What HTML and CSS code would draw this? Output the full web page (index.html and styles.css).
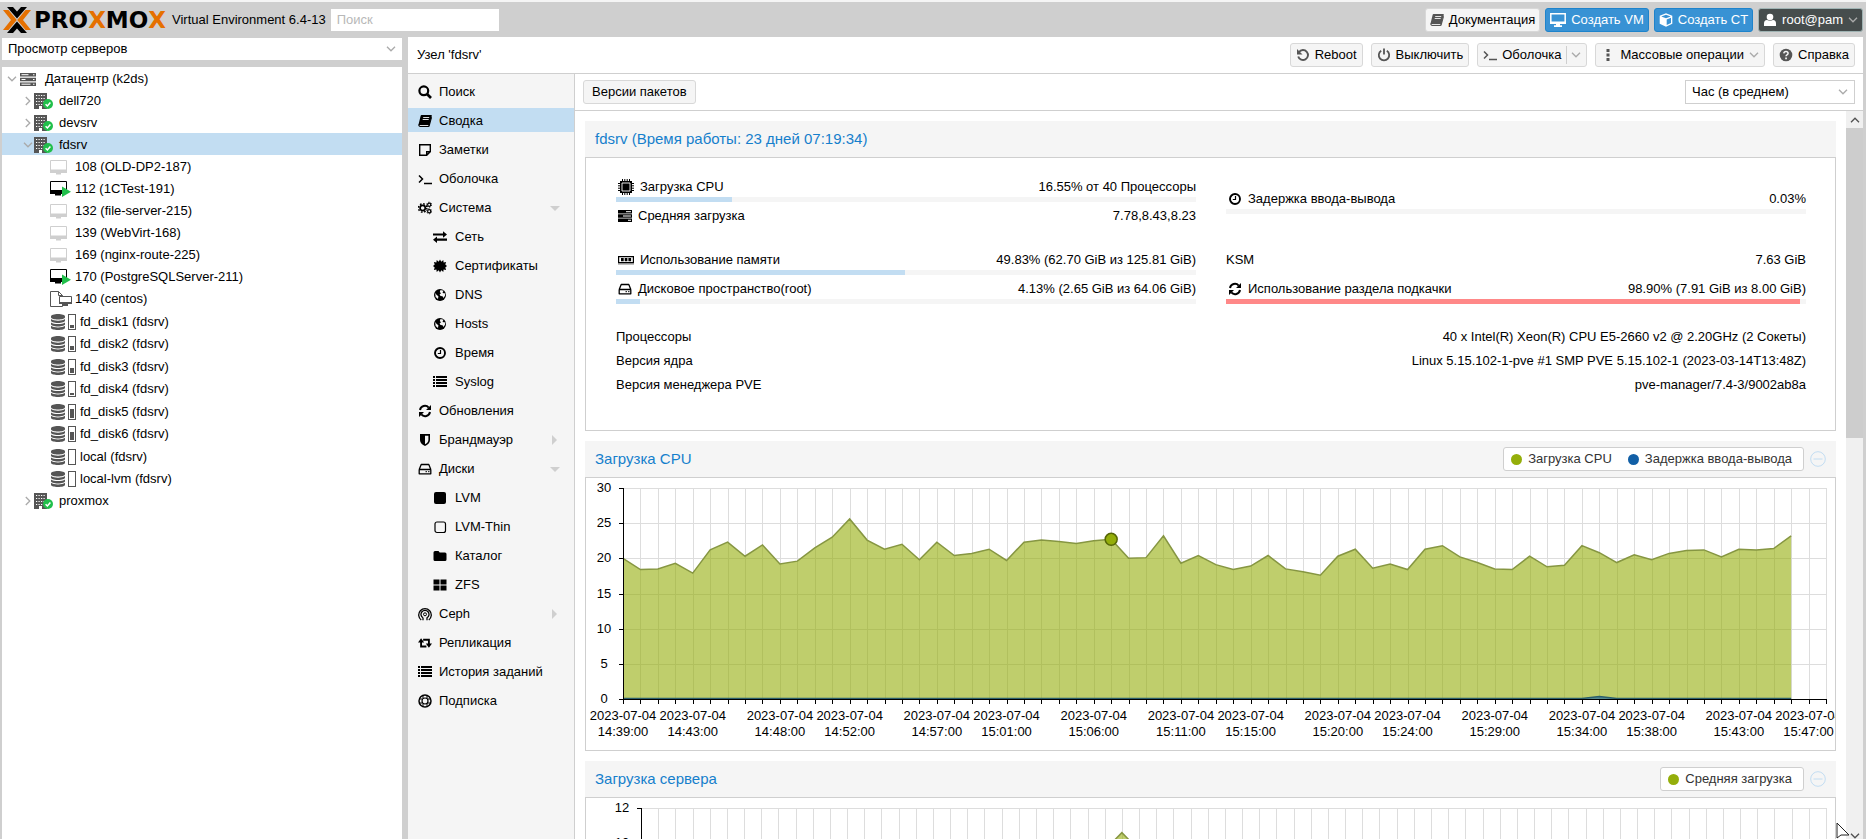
FILE: index.html
```html
<!doctype html>
<html lang="ru">
<head>
	<meta charset="UTF-8">
	<meta name="viewport" content="width=device-width, initial-scale=1.0">
	<title>fdsrv - Proxmox Virtual Environment</title>
	<link rel="stylesheet" href="styles.css">
</head>
<body>
	<!-- icon set -->
	<svg class="sprite" aria-hidden="true">
		<symbol id="chev-down" viewBox="0 0 10 6"><path d="M1 .8l4 4 4-4" fill="none" stroke="currentColor" stroke-width="1.3"/></symbol>
		<symbol id="chev-right" viewBox="0 0 6 10"><path d="M.8 1l4 4-4 4" fill="none" stroke="currentColor" stroke-width="1.3"/></symbol>
		<symbol id="logo" viewBox="0 0 28 26">
			<path d="M4 0h6l4 4.600 4-4.600h6l-10 11.400z"/>
			<path d="M4 26h6l4-4.600 4 4.600h6l-10-11.400z"/>
			<path d="M0 3h5.500l8.300 10-8.300 10H0l8-10zM28 3h-5.500l-8.300 10 8.300 10H28l-8-10z" fill="#e57000"/>
		</symbol>
		<symbol id="servers" viewBox="0 0 16 13"><path d="M0 0h16v3.500H0zM0 4.750h16v3.500H0zM0 9.500h16V13H0z"/><path d="M1.500 1.700h7M1.500 6.500h4M1.500 11.200h9" stroke="#fff"/><path d="M13 1.200h1.500v1H13zM13 6h1.500v1H13zM13 10.700h1.500v1H13z" fill="#fff"/></symbol>
		<symbol id="node" viewBox="0 0 19 16">
			<path d="M0 0h13v16H0z"/>
			<path d="M2 2.500h9M2 5.500h9M2 8.500h9M2 11.500h7" stroke="#fff" stroke-width="1.200" stroke-dasharray="1.200 1.300"/>
			<path d="M5 13h3v3H5z" fill="#fff"/>
			<circle cx="14" cy="11" r="5" fill="#21bf4b"/>
			<path d="M11.600 11.200l1.800 1.800 3-3.600" fill="none" stroke="#fff" stroke-width="1.500"/>
		</symbol>
		<symbol id="vm" viewBox="0 0 17 15"><path d="M.5.5h16v12H.5z" fill="#fff" stroke="currentColor"/><path d="M0 9.500h17V13H0zM6 13h5v1.500H6z"/></symbol>
		<symbol id="vm-run" viewBox="0 0 21 16"><path d="M.5.5h16v12H.5z" fill="#fff" stroke="#000"/><path d="M0 9h13v4H0zM5 13h6v1.500H5z" fill="#000"/><path d="M12 5.500l9 5.200-9 5.300z" fill="#21bf4b"/></symbol>
		<symbol id="template" viewBox="0 0 22 16"><path d="M.5.5h8l4 4v11H.5zM8.500.5v4h4" fill="#fff" stroke="currentColor"/><path d="M9.500 5.500h12v7h-12z" fill="#fff" stroke="currentColor"/><path d="M9 11h13v2H9zM13 13h5v2h-5z"/></symbol>
		<symbol id="db" viewBox="0 0 14 16"><path d="M7 0c3.900 0 7 1 7 2.300v1c0 1.300-3.100 2.300-7 2.300S0 4.600 0 3.300v-1C0 1 3.100 0 7 0z"/><path d="M0 5c1.500 1.300 4 1.700 7 1.700S12.500 6.300 14 5v1.800C14 8 11 9 7 9S0 8 0 6.800zM0 8.400c1.500 1.300 4 1.700 7 1.700s5.500-.4 7-1.700v1.800c0 1.200-3 2.200-7 2.200s-7-1-7-2.200zM0 11.800c1.500 1.300 4 1.700 7 1.700s5.500-.4 7-1.700v1.900C14 15 11 16 7 16s-7-1-7-2.300z"/></symbol>
		<symbol id="search" viewBox="0 0 14 14"><circle cx="5.800" cy="5.800" r="4.400" fill="none" stroke="currentColor" stroke-width="2.200"/><path d="M9 9l4 4" stroke="currentColor" stroke-width="2.600"/></symbol>
		<symbol id="book" viewBox="0 0 14 14"><path d="M3.500 1h9.700q.8.100.6 1L11.500 10.500q-.3 1-1.200 1H.3L2.600 2Q2.800 1 3.500 1z"/><path d="M.4 10.500h9.600q.8 0 1-.8L13.300 3l.7.500-2.300 8.500q-.3 1-1.300 1H2Q.2 12.700.4 10.500z"/><path d="M5.200 3.500h6M4.700 5.500h6M1.700 11.500h8.600" stroke="#f5f5f5" stroke-width=".9"/></symbol>
		<symbol id="note" viewBox="0 0 14 14"><path d="M1.700 1.700h10.600v7l-3.600 3.600h-7zM12.300 8.700H8.700v3.600" fill="none" stroke="currentColor" stroke-width="1.400"/></symbol>
		<symbol id="terminal" viewBox="0 0 14 14"><path d="M1 3.500L4.500 7 1 10.500M6 11.500h8" fill="none" stroke="currentColor" stroke-width="1.500"/></symbol>
		<symbol id="cogs" viewBox="0 0 15 14"><circle cx="5" cy="7" r="2.800" fill="none" stroke="currentColor" stroke-width="1.800"/><circle cx="5" cy="7" r="4.500" fill="none" stroke="currentColor" stroke-width="1.600" stroke-dasharray="1.770 1.764"/><circle cx="12" cy="3.500" r="1.700" fill="none" stroke="currentColor" stroke-width="1.300"/><circle cx="12" cy="3.500" r="2.700" fill="none" stroke="currentColor" stroke-dasharray="1.400 1.430"/><circle cx="12" cy="10.500" r="1.700" fill="none" stroke="currentColor" stroke-width="1.300"/><circle cx="12" cy="10.500" r="2.700" fill="none" stroke="currentColor" stroke-dasharray="1.400 1.430"/></symbol>
		<symbol id="exchange" viewBox="0 0 14 14"><path d="M0 3.500h10V1.300l4 3.200-4 3.200V5.500H0zM14 8.500H4V6.600L0 9.800 4 13v-2.300h10z"/></symbol>
		<symbol id="cert" viewBox="0 0 14 14"><path d="M7 .5l1.300 2.200L10.300 1l.3 2.500 2.500-.4-.8 2.400 1.700 1.500-1.700 1.500.8 2.400-2.500-.4-.3 2.500-2-1.700L7 13.500l-1.300-2.200-2 1.700-.3-2.500-2.500.4.8-2.400L0 7l1.700-1.500-.8-2.400 2.500.4L3.700 1l2 1.700z"/></symbol>
		<symbol id="globe" viewBox="0 0 14 14"><circle cx="7" cy="7" r="6"/><path d="M7.500 2l3 .8-1 1.700 1.500 1 1.300-.5-.3 2.800-1.500 2.200-1-1.700L7.500 8 6.600 6.500 8 5.300 6.800 4zM2.200 5l1.500 2 1.700 1.200L5 11l-2.400-2z" fill="#f5f5f5"/></symbol>
		<symbol id="clock" viewBox="0 0 14 14"><circle cx="7" cy="7" r="5" fill="none" stroke="currentColor" stroke-width="1.900"/><path d="M7.500 4v3.500H4.800" fill="none" stroke="currentColor" stroke-width="1.200"/></symbol>
		<symbol id="list" viewBox="0 0 14 14"><path d="M0 2h2M0 5h2M0 8h2M0 11h2M3 2h11M3 5h11M3 8h11M3 11h11" stroke="currentColor" stroke-width="2"/></symbol>
		<symbol id="refresh" viewBox="0 0 14 14"><path d="M2 6a5 5 0 0 1 8.700-2.400M12 8a5 5 0 0 1-8.700 2.400" fill="none" stroke="currentColor" stroke-width="2"/><path d="M13 1v5H8zM1 13V8h5z"/></symbol>
		<symbol id="shield" viewBox="0 0 14 14"><path d="M2 1h10v6c0 3-2.500 5-5 6-2.500-1-5-3-5-6z"/><path d="M7 2.700h3.400V7c0 1.900-1.500 3.200-3.400 4.200z" fill="#f5f5f5"/></symbol>
		<symbol id="hdd" viewBox="0 0 14 14"><path d="M1.200 7.500h11.600v4.300H1.200zM1.200 7.500l2-5h7.600l2 5" fill="none" stroke="currentColor" stroke-width="1.300" stroke-linejoin="round"/><path d="M7.500 9.700H9M10 9.700h1.500" stroke="currentColor"/></symbol>
		<symbol id="square" viewBox="0 0 14 14"><rect x="1" y="1" width="12" height="12" rx="2"/></symbol>
		<symbol id="square-o" viewBox="0 0 14 14"><rect x="2" y="2" width="10.500" height="10.500" rx="2" fill="none" stroke="currentColor" stroke-width="1.200"/></symbol>
		<symbol id="folder" viewBox="0 0 14 14"><path d="M2 2h3.500l1.200 1.500H12q1.500 0 1.500 1.500v5.500q0 1.500-1.500 1.500H2Q.5 12 .5 10.500v-7Q.5 2 2 2z"/></symbol>
		<symbol id="grid" viewBox="0 0 14 14"><path d="M.5 1.500h6v5h-6zM7.500 1.500h6v5h-6zM.5 7.500h6v5h-6zM7.500 7.500h6v5h-6z"/></symbol>
		<symbol id="ceph" viewBox="0 0 14 14"><path d="M3.200 13A6.300 6.300 0 1 1 10.800 13M5 10.800a4 4 0 1 1 4 0v2.500M5 10.800v2.500" fill="none" stroke="currentColor" stroke-width="1.300"/><circle cx="7" cy="7.300" r="1.500" fill="none" stroke="currentColor"/></symbol>
		<symbol id="retweet" viewBox="0 0 15 14"><path d="M3.300 5v5.700H9M5.500 3.500h6.200V9" fill="none" stroke="currentColor" stroke-width="2"/><path d="M3.300 2L0 6.500h6.600zM11.700 12L8.400 7.500H15z"/></symbol>
		<symbol id="ring" viewBox="0 0 14 14"><circle cx="7" cy="7" r="6" fill="none" stroke="currentColor" stroke-width="1.500"/><circle cx="7" cy="7" r="3" fill="none" stroke="currentColor" stroke-width="1.200"/><path d="M5 1.200v3.300M9 1.200v3.300M5 9.500v3.300M9 9.500v3.300M1.200 5h3.300M1.200 9h3.300M9.500 5h3.300M9.500 9h3.300" stroke="currentColor"/></symbol>
		<symbol id="undo" viewBox="0 0 14 14"><path d="M3 4a5 5 0 1 1-.8 4.500" fill="none" stroke="currentColor" stroke-width="1.900"/><path d="M1 1v5.500h5.500z"/></symbol>
		<symbol id="power" viewBox="0 0 14 14"><path d="M4.200 2.800a5.200 5.200 0 1 0 5.600 0M7 .5v6" fill="none" stroke="currentColor" stroke-width="1.800"/></symbol>
		<symbol id="dots" viewBox="0 0 14 14"><path d="M5.500 1h3v3h-3zM5.500 5.500h3v3h-3zM5.500 10h3v3h-3z"/></symbol>
		<symbol id="help" viewBox="0 0 14 14"><circle cx="7" cy="7" r="6.300"/><path d="M4.800 5.300Q5 3.400 7 3.400t2.100 1.800Q9.100 6.200 8 6.800 7 7.400 7 8.300" fill="none" stroke="#f5f5f5" stroke-width="1.500"/><path d="M6.200 9.500h1.700v1.700H6.200z" fill="#f5f5f5"/></symbol>
		<symbol id="desktop" viewBox="0 0 16 14"><path d="M.8.8h14.400v9.400H.8z" fill="none" stroke="currentColor" stroke-width="1.500"/><path d="M0 8.500h16V11H0zM6 11h4v1.300h2V14H4v-1.700h2z"/></symbol>
		<symbol id="cube" viewBox="0 0 14 14"><path d="M7 .3l6.300 2.500v8L7 13.800.7 10.800v-8z"/><path d="M2.300 3.400L7 5.200l4.700-1.800L7 1.700zM7.700 6.400v5.600l4.300-2V4.800z" fill="#3892d4"/></symbol>
		<symbol id="user" viewBox="0 0 14 14"><circle cx="7" cy="4" r="3.300"/><path d="M1 13V10.500Q1 7 4 7q3 1.500 6 0 3 0 3 3.500V13z"/></symbol>
		<symbol id="cpu" viewBox="0 0 16 16"><path d="M4.500 0v16M6.800 0v16M9.200 0v16M11.500 0v16M0 4.500h16M0 6.800h16M0 9.200h16M0 11.500h16" stroke="currentColor"/><path d="M2 2h12v12H2z"/><path d="M4 4h8v8H4z" stroke="#fff" stroke-width=".9"/></symbol>
		<symbol id="tasks" viewBox="0 0 14 14"><path d="M0 1h14v3.400H0zM0 5.300h14v3.400H0zM0 9.600h14V13H0z"/><path d="M8 2.700h5M5 7h8M10 11.300h3" stroke="#fff"/></symbol>
		<symbol id="ram" viewBox="0 0 16 14"><path d="M.6 3.600h14.800v6H.6z" fill="none" stroke="currentColor" stroke-width="1.200"/><path d="M3 5h2.700v3.200H3zM6.700 5h2.700v3.200H6.700zM10.400 5h2.700v3.200h-2.700z"/><path d="M.5 11h15" stroke="currentColor" stroke-dasharray="1 1"/></symbol>
		<symbol id="minus" viewBox="0 0 16 16"><circle cx="8" cy="8" r="7.300" fill="none" stroke="currentColor"/><path d="M3.500 8h9" stroke="currentColor"/></symbol>
	</svg>

	<header class="top">
		<svg class="logo-mark"><use href="#logo"/></svg>
		<span class="logo-name">PRO<b>X</b>MO<b>X</b></span>
		<span class="version">Virtual Environment 6.4-13</span>
		<input class="search" type="text" placeholder="Поиск" aria-label="Поиск">
		<div class="top-buttons">
			<button class="btn btn-doc"><svg class="ic"><use href="#book"/></svg>Документация</button>
			<button class="btn btn-blue"><svg class="ic ic-wide"><use href="#desktop"/></svg>Создать VM</button>
			<button class="btn btn-blue"><svg class="ic"><use href="#cube"/></svg>Создать CT</button>
			<button class="btn btn-user"><svg class="ic"><use href="#user"/></svg>root@pam<svg class="chev"><use href="#chev-down"/></svg></button>
		</div>
	</header>

	<div class="main">
		<aside class="sidebar">
			<div class="combo combo-view">
				<select aria-label="Вид"><option>Просмотр серверов</option></select>
				<svg class="chev"><use href="#chev-down"/></svg>
			</div>
			<div class="tree">
				<div class="row"><svg class="chev"><use href="#chev-down"/></svg><svg class="t-dc"><use href="#servers"/></svg>Датацентр (k2ds)</div>
				<div class="row lvl1"><svg class="chev-r"><use href="#chev-right"/></svg><svg class="t-node"><use href="#node"/></svg>dell720</div>
				<div class="row lvl1"><svg class="chev-r"><use href="#chev-right"/></svg><svg class="t-node"><use href="#node"/></svg>devsrv</div>
				<div class="row lvl1 selected"><svg class="chev"><use href="#chev-down"/></svg><svg class="t-node"><use href="#node"/></svg>fdsrv</div>
				<div class="row lvl2"><svg class="t-vm off"><use href="#vm"/></svg>108 (OLD-DP2-187)</div>
				<div class="row lvl2"><svg class="t-run"><use href="#vm-run"/></svg>112 (1CTest-191)</div>
				<div class="row lvl2"><svg class="t-vm off"><use href="#vm"/></svg>132 (file-server-215)</div>
				<div class="row lvl2"><svg class="t-vm off"><use href="#vm"/></svg>139 (WebVirt-168)</div>
				<div class="row lvl2"><svg class="t-vm off"><use href="#vm"/></svg>169 (nginx-route-225)</div>
				<div class="row lvl2"><svg class="t-run"><use href="#vm-run"/></svg>170 (PostgreSQLServer-211)</div>
				<div class="row lvl2"><svg class="t-tpl"><use href="#template"/></svg>140 (centos)</div>
				<div class="row storage"><svg class="t-db"><use href="#db"/></svg><span class="gauge"><i style="height: 18%"></i></span>fd_disk1 (fdsrv)</div>
				<div class="row storage"><svg class="t-db"><use href="#db"/></svg><span class="gauge"><i style="height: 36%"></i></span>fd_disk2 (fdsrv)</div>
				<div class="row storage"><svg class="t-db"><use href="#db"/></svg><span class="gauge"><i style="height: 36%"></i></span>fd_disk3 (fdsrv)</div>
				<div class="row storage"><svg class="t-db"><use href="#db"/></svg><span class="gauge"><i style="height: 18%"></i></span>fd_disk4 (fdsrv)</div>
				<div class="row storage"><svg class="t-db"><use href="#db"/></svg><span class="gauge"><i style="height: 72%"></i></span>fd_disk5 (fdsrv)</div>
				<div class="row storage"><svg class="t-db"><use href="#db"/></svg><span class="gauge"><i style="height: 63%"></i></span>fd_disk6 (fdsrv)</div>
				<div class="row storage"><svg class="t-db"><use href="#db"/></svg><span class="gauge"></span>local (fdsrv)</div>
				<div class="row storage"><svg class="t-db"><use href="#db"/></svg><span class="gauge"></span>local-lvm (fdsrv)</div>
				<div class="row lvl1"><svg class="chev-r"><use href="#chev-right"/></svg><svg class="t-node"><use href="#node"/></svg>proxmox</div>
			</div>
		</aside>

		<section class="content">
			<div class="title-bar">
				<span class="node-title">Узел 'fdsrv'</span>
				<button class="btn"><svg class="ic"><use href="#undo"/></svg>Reboot</button>
				<button class="btn"><svg class="ic"><use href="#power"/></svg>Выключить</button>
				<button class="btn btn-split"><svg class="ic"><use href="#terminal"/></svg>Оболочка<span class="split"><svg class="chev"><use href="#chev-down"/></svg></span></button>
				<button class="btn"><svg class="ic"><use href="#dots"/></svg>Массовые операции<svg class="chev"><use href="#chev-down"/></svg></button>
				<button class="btn"><svg class="ic"><use href="#help"/></svg>Справка</button>
			</div>
			<div class="work">
				<nav class="menu">
					<a href="#"><svg class="ic"><use href="#search"/></svg>Поиск</a>
					<a href="#" class="active"><svg class="ic"><use href="#book"/></svg>Сводка</a>
					<a href="#"><svg class="ic"><use href="#note"/></svg>Заметки</a>
					<a href="#"><svg class="ic"><use href="#terminal"/></svg>Оболочка</a>
					<a href="#" class="open"><svg class="ic"><use href="#cogs"/></svg>Система</a>
					<a href="#" class="sub"><svg class="ic"><use href="#exchange"/></svg>Сеть</a>
					<a href="#" class="sub"><svg class="ic"><use href="#cert"/></svg>Сертификаты</a>
					<a href="#" class="sub"><svg class="ic"><use href="#globe"/></svg>DNS</a>
					<a href="#" class="sub"><svg class="ic"><use href="#globe"/></svg>Hosts</a>
					<a href="#" class="sub"><svg class="ic"><use href="#clock"/></svg>Время</a>
					<a href="#" class="sub"><svg class="ic"><use href="#list"/></svg>Syslog</a>
					<a href="#"><svg class="ic"><use href="#refresh"/></svg>Обновления</a>
					<a href="#" class="closed"><svg class="ic"><use href="#shield"/></svg>Брандмауэр</a>
					<a href="#" class="open"><svg class="ic"><use href="#hdd"/></svg>Диски</a>
					<a href="#" class="sub"><svg class="ic"><use href="#square"/></svg>LVM</a>
					<a href="#" class="sub"><svg class="ic"><use href="#square-o"/></svg>LVM-Thin</a>
					<a href="#" class="sub"><svg class="ic"><use href="#folder"/></svg>Каталог</a>
					<a href="#" class="sub"><svg class="ic"><use href="#grid"/></svg>ZFS</a>
					<a href="#" class="closed"><svg class="ic"><use href="#ceph"/></svg>Ceph</a>
					<a href="#"><svg class="ic"><use href="#retweet"/></svg>Репликация</a>
					<a href="#"><svg class="ic"><use href="#list"/></svg>История заданий</a>
					<a href="#"><svg class="ic"><use href="#ring"/></svg>Подписка</a>
				</nav>
				<div class="summary">
					<div class="toolbar">
						<button class="btn">Версии пакетов</button>
						<div class="combo combo-period">
							<select aria-label="Период"><option>Час (в среднем)</option></select>
							<svg class="chev"><use href="#chev-down"/></svg>
						</div>
					</div>
					<div class="scroll-area">
						<div class="panels">
							<section class="panel">
								<div class="panel-head"><h2>fdsrv (Время работы: 23 дней 07:19:34)</h2></div>
								<div class="stats">
									<div class="stat-group">
										<div class="stat"><svg class="ic ic-wide"><use href="#cpu"/></svg><span>Загрузка CPU</span><span class="val">16.55% от 40 Процессоры</span></div>
										<div class="bar"><i style="width: 20%"></i></div>
										<div class="stat"><svg class="ic"><use href="#tasks"/></svg><span>Средняя загрузка</span><span class="val">7.78,8.43,8.23</span></div>
									</div>
									<div class="stat-group middle">
										<div class="stat"><svg class="ic"><use href="#clock"/></svg><span>Задержка ввода-вывода</span><span class="val">0.03%</span></div>
										<div class="bar"></div>
									</div>
									<div class="stat-group">
										<div class="stat"><svg class="ic ic-wide"><use href="#ram"/></svg><span>Использование памяти</span><span class="val">49.83% (62.70 GiB из 125.81 GiB)</span></div>
										<div class="bar"><i style="width: 49.83%"></i></div>
										<div class="stat"><svg class="ic"><use href="#hdd"/></svg><span>Дисковое пространство(root)</span><span class="val">4.13% (2.65 GiB из 64.06 GiB)</span></div>
										<div class="bar"><i style="width: 4.13%"></i></div>
									</div>
									<div class="stat-group">
										<div class="stat no-bar"><span>KSM</span><span class="val">7.63 GiB</span></div>
										<div class="stat"><svg class="ic"><use href="#refresh"/></svg><span>Использование раздела подкачки</span><span class="val">98.90% (7.91 GiB из 8.00 GiB)</span></div>
										<div class="bar critical"><i style="width: 98.9%"></i></div>
									</div>
								</div>
								<dl class="info">
									<div><dt>Процессоры</dt><dd>40 x Intel(R) Xeon(R) CPU E5-2660 v2 @ 2.20GHz (2 Сокеты)</dd></div>
									<div><dt>Версия ядра</dt><dd>Linux 5.15.102-1-pve #1 SMP PVE 5.15.102-1 (2023-03-14T13:48Z)</dd></div>
									<div><dt>Версия менеджера PVE</dt><dd>pve-manager/7.4-3/9002ab8a</dd></div>
								</dl>
							</section>

							<section class="panel">
								<div class="panel-head">
									<h2>Загрузка CPU</h2>
									<div class="legend"><span class="cpu">Загрузка CPU</span><span class="io">Задержка ввода-вывода</span></div>
									<svg class="minus"><use href="#minus"/></svg>
								</div>
								<svg class="chart" id="cpu-chart"></svg>
							</section>

							<section class="panel">
								<div class="panel-head">
									<h2>Загрузка сервера</h2>
									<div class="legend"><span class="cpu">Средняя загрузка</span></div>
									<svg class="minus"><use href="#minus"/></svg>
								</div>
								<svg class="chart" id="load-chart"></svg>
							</section>
						</div>
						<div class="scrollbar">
							<svg class="chev up"><use href="#chev-down"/></svg>
							<div class="thumb"></div>
							<svg class="chev"><use href="#chev-down"/></svg>
						</div>
					</div>
				</div>
			</div>
		</section>
	</div>
	<svg class="cursor" viewBox="0 0 14 17"><path d="M1 1v15l4-3h8z" fill="#fff" stroke="#222"/></svg>

	<script>
		let cpu = [20, 18.4, 18.5, 19.3, 17.9, 21.2, 22.3, 20.3, 21.9, 19.2, 19.6, 21.5, 23, 25.6, 22.6, 21.3, 22,
			19.8, 22.3, 20.4, 20.7, 21.3, 19.7, 22.3, 22.6, 22.4, 22.1, 22.5, 22.7, 20, 20.1, 23.2, 19.3, 20.4,
			19.1, 18.4, 18.9, 20.4, 18.5, 18.1, 17.6, 20.3, 21.3, 18.6, 19.2, 18.4, 21.3, 21.8, 20.2, 19.4, 18.5,
			18.4, 20.3, 18.8, 19, 21.8, 20.8, 19.4, 20.5, 19.8, 20.7, 21.1, 21.2, 20.2, 21.3, 21.2, 21.4, 23.2];
		let io = cpu.map((v, i) => i === 56 ? 0.35 : 0.08);
		let load = cpu.map((v, i) => i === 28 ? 10.6 : (i === 27 || i === 29 ? 9.6 : 8.2));
		let marks = [0, 4, 9, 13, 18, 22, 27, 32, 36, 41, 45, 50, 55, 59, 64, 68];
		let steps = 69;

		function timeAt(i) {
			let m = 14 * 60 + 39 + i;
			return Math.floor(m / 60) + ':' + String(m % 60).padStart(2, '0') + ':00';
		}

		function drawChart(id, opt) {
			let svg = document.getElementById(id);
			let right = svg.clientWidth - 9;
			let top = 10;
			let bottom = 221;
			let x = i => opt.left + (right - opt.left) * i / steps;
			let y = v => bottom - (bottom - top) * v / opt.max;
			let out = '';
			// grid and ticks
			for (let i = 0; i <= steps; i++) {
				let gx = Math.round(x(i));
				out += `<path class="grid" d="M${gx} ${top}V${bottom}"/><path class="axis" d="M${gx} ${bottom}v5"/>`;
			}
			for (let v = 0; v <= opt.max; v += opt.step) {
				let gy = Math.round(y(v));
				out += `<path class="grid" d="M${opt.left} ${gy}H${right}"/><path class="axis" d="M${opt.left} ${gy}h-4"/>`;
				out += `<text x="${opt.left - 19}" y="${gy + 4}">${v}</text>`;
			}
			// series
			opt.series.forEach(s => {
				let line = s.data.map((v, i) => x(i) + ' ' + y(v)).join('L');
				out += `<path class="area ${s.name}" d="M${line}V${bottom}H${opt.left}z"/><path class="line ${s.name}" d="M${line}"/>`;
			});
			out += `<path class="axis" d="M${opt.left} ${top}V${bottom}H${right}"/>`;
			if (opt.marker) {
				out += `<circle class="marker" cx="${x(opt.marker)}" cy="${y(opt.series[0].data[opt.marker])}" r="6"/>`;
			}
			marks.forEach(i => {
				out += `<text x="${x(i)}" y="242">2023-07-04</text><text x="${x(i)}" y="258">${timeAt(i)}</text>`;
			});
			svg.innerHTML = out;
		}

		function drawAll() {
			drawChart('cpu-chart', {left: 37, max: 30, step: 5, marker: 28, series: [{name: 'cpu', data: cpu}, {name: 'io', data: io}]});
			drawChart('load-chart', {left: 55, max: 12, step: 2, series: [{name: 'cpu', data: load}]});
		}
		drawAll();
		window.onresize = drawAll;
	</script>
</body>
</html>
```
FILE: styles.css
```css
* {
	box-sizing: border-box;
	margin: 0;
	padding: 0;
}
body {
	display: flex;
	flex-direction: column;
	height: 100vh;
	overflow: hidden;
	border-top: 2px solid #f5f5f5;
	background-color: #cfcfcf;
	color: #000;
	font: 13px/20px "Liberation Sans", Arial, sans-serif;
}
svg {
	flex: none;
	fill: currentColor;
}
button, input, select {
	font: inherit;
	color: inherit;
}
.sprite {
	position: absolute;
	width: 0;
	height: 0;
}
.ic {
	width: 14px;
	height: 14px;
}
.ic-wide {
	width: 16px;
}
.chev {
	width: 10px;
	height: 6px;
	color: #aaa;
}
.chev-r {
	width: 6px;
	height: 10px;
	color: #aaa;
}

/* header */
.top {
	display: flex;
	align-items: center;
	height: 35px;
	padding: 0 0 0 3px;
}
.logo-mark {
	width: 28px;
	height: 26px;
}
.logo-name {
	width: 138px;
	margin-left: 3px;
	font: bold 23px/26px "DejaVu Sans", sans-serif;
}
.logo-name b {
	color: #e57000;
}
.search {
	width: 168px;
	height: 22px;
	margin-left: 5px;
	padding: 0 6px;
	border: 0;
	background-color: #fff;
}
.search::placeholder {
	color: #b8b8b8;
}
.top-buttons {
	display: flex;
	gap: 5px;
	margin-left: auto;
	padding-right: 3px;
}
.btn {
	display: flex;
	align-items: center;
	gap: 5px;
	height: 24px;
	padding: 0 5px;
	border: 1px solid #d8d8d8;
	border-radius: 3px;
	background-color: #f5f5f5;
	white-space: nowrap;
}
.top-buttons .btn {
	padding: 0 4px;
}
.btn .ic {
	color: #555;
}
.btn-blue, .btn-user {
	border-color: #1e83cb;
	background-color: #3892d4;
	color: #fff;
}
.btn-user {
	border-color: #9fb3b3;
	background-color: #464d4d;
}
.btn-blue .ic, .btn-user .ic {
	color: #fff;
}
.split {
	display: flex;
	align-items: center;
	height: 18px;
	padding-left: 4px;
	border-left: 1px solid #cfcfcf;
}

.main {
	display: flex;
	flex: 1;
	min-height: 0;
	padding: 0 3px 0 2px;
	gap: 6px;
}

/* resource tree */
.sidebar {
	display: flex;
	flex-direction: column;
	gap: 7px;
	width: 400px;
	padding-top: 1px;
}
.combo {
	position: relative;
	height: 22px;
	background-color: #fff;
}
.combo select {
	width: 100%;
	height: 100%;
	padding: 0 6px;
	border: 0;
	background: none;
	appearance: none;
}
.combo .chev {
	position: absolute;
	top: 8px;
	right: 6px;
}
.tree {
	flex: 1;
	background-color: #fff;
}
.row {
	display: flex;
	align-items: center;
	height: 22px;
	padding: 2px 0 0 5px;
	white-space: nowrap;
}
.row svg {
	color: #555;
}
.row .chev, .row .chev-r {
	color: #aaa;
}
.row.selected {
	background-color: #c2ddf2;
}
.lvl1 {
	padding-left: 21px;
}
.lvl1 .chev-r {
	margin: 0 3px 0 2px;
}
.lvl1 .t-node {
	margin: 0 6px 0 0;
}
.lvl1 .chev {
	margin-right: 1px;
}
.lvl2, .storage {
	padding-left: 48px;
}
.storage:nth-child(even) {
	height: 23px;
}
.t-dc {
	width: 16px;
	height: 13px;
	margin: 0 9px 0 3px;
}
.t-node {
	width: 19px;
	height: 16px;
}
.t-vm {
	width: 17px;
	height: 15px;
	margin-right: 8px;
}
.row .off {
	color: #cfcfcf;
}
.t-run {
	width: 21px;
	height: 16px;
	margin-right: 4px;
}
.t-tpl {
	width: 22px;
	height: 16px;
	margin-right: 3px;
}
.t-db {
	width: 14px;
	height: 16px;
	margin: 0 3px 0 1px;
}
.gauge {
	display: flex;
	align-items: flex-end;
	width: 8px;
	height: 16px;
	margin-right: 4px;
	padding: 1px;
	border: 1px solid #555;
}
.gauge i {
	width: 100%;
	background-color: #555;
}

/* node view */
.content {
	display: flex;
	flex: 1;
	flex-direction: column;
	min-width: 0;
	background-color: #fff;
}
.title-bar {
	display: flex;
	flex: none;
	align-items: center;
	gap: 8px;
	height: 37px;
	padding: 0 8px 0 9px;
	border-bottom: 1px solid #cfcfcf;
}
.node-title {
	margin-right: auto;
}
.work {
	display: flex;
	flex: 1;
	min-height: 0;
}
.menu {
	display: flex;
	flex: none;
	flex-direction: column;
	gap: 5px;
	width: 167px;
	padding-top: 5px;
	border-right: 1px solid #cfcfcf;
	background-color: #f5f5f5;
}
.menu a {
	display: flex;
	align-items: center;
	gap: 7px;
	height: 24px;
	padding: 2px 14px 0 10px;
	color: #000;
	text-decoration: none;
}
.menu .sub {
	padding-left: 25px;
	gap: 8px;
}
.menu .active {
	background-color: #c2ddf2;
}
.menu .open::after, .menu .closed::after {
	content: "";
	margin-left: auto;
	border: 5px solid transparent;
	border-top-color: #cfcfcf;
	border-bottom: 0;
}
.menu .closed::after {
	margin-right: 3px;
	border: 5px solid transparent;
	border-left-color: #cfcfcf;
	border-right: 0;
}

.summary {
	display: flex;
	flex: 1;
	flex-direction: column;
	min-width: 0;
}
.toolbar {
	display: flex;
	flex: none;
	align-items: center;
	justify-content: space-between;
	height: 37px;
	padding: 0 8px;
	border-bottom: 1px solid #cfcfcf;
}
.toolbar .btn {
	padding: 0 8px;
}
.combo-period {
	width: 170px;
	height: 24px;
	border: 1px solid #cfcfcf;
}
.scroll-area {
	display: flex;
	flex: 1;
	min-height: 0;
}
.panels {
	display: flex;
	flex: 1;
	flex-direction: column;
	gap: 10px;
	min-width: 0;
	overflow: hidden auto;
	padding: 10px 10px 10px 10px;
	scrollbar-width: none;
}
.panel {
	flex: none;
	border: 1px solid #cfcfcf;
	border-top: 0;
}
.panel-head {
	display: flex;
	align-items: center;
	gap: 6px;
	height: 37px;
	margin: 0 -1px;
	padding: 0 10px;
	border-bottom: 1px solid #cfcfcf;
	background-color: #f5f5f5;
}
.panel-head h2 {
	margin-right: auto;
	color: #157fcc;
	font-size: 15px;
	font-weight: normal;
}
.legend {
	display: flex;
	gap: 16px;
	height: 24px;
	padding: 0 11px 0 7px;
	border: 1px solid #cfcfcf;
	border-radius: 3px;
	background-color: #fff;
	color: #333;
	line-height: 22px;
}
.legend span {
	display: flex;
	align-items: center;
	gap: 6px;
}
.legend span::before {
	content: "";
	width: 11px;
	height: 11px;
	border-radius: 50%;
	background-color: #94ae0a;
}
.legend .io::before {
	background-color: #115fa6;
}
.minus {
	width: 16px;
	height: 16px;
	color: #c2ddf2;
}

.stats {
	display: grid;
	grid-template-columns: 1fr 1fr;
	gap: 19px 30px;
	padding: 19px 29px 21px 30px;
}
.stat {
	display: flex;
	align-items: center;
	gap: 6px;
	padding-left: 2px;
	white-space: nowrap;
}
.bar + .stat {
	margin-top: 4px;
}
.stat .val {
	margin-left: auto;
}
.stat .ic-wide {
	height: 16px;
}
.no-bar {
	margin-bottom: 9px;
	padding-left: 0;
}
.bar {
	height: 5px;
	background-color: #f5f5f5;
}
.bar i {
	display: block;
	height: 100%;
	background-color: #c2ddf2;
}
.critical i {
	background-color: #ff8888;
}
.middle {
	padding-top: 12px;
}
.stat-group {
	min-height: 54px;
}
.info {
	padding: 0 29px 33px 30px;
}
.info div {
	display: flex;
	justify-content: space-between;
	line-height: 24px;
}

/* charts */
.chart {
	display: block;
	width: 100%;
	height: 272px;
	font-size: 13px;
}
.chart text {
	text-anchor: middle;
}
.chart .grid, .chart .axis {
	fill: none;
	stroke: #ddd;
	shape-rendering: crispEdges;
}
.chart .axis {
	stroke: #000;
}
.area.cpu {
	fill: #94ae0a;
	fill-opacity: .6;
}
.area.io {
	fill: #115fa6;
	fill-opacity: .6;
}
.line {
	fill: none;
	stroke: #869642;
	stroke-width: 1.5px;
}
.line.io {
	stroke: #2c5f6c;
}
.marker {
	fill: #94ae0a;
	stroke: #566606;
	stroke-width: 1.5px;
}

.scrollbar {
	display: flex;
	flex-direction: column;
	align-items: center;
	width: 17px;
	padding: 6px 0 0;
	background-color: #f0f0f0;
}
.scrollbar .chev {
	color: #505050;
}
.scrollbar .up {
	transform: rotate(180deg);
}
.thumb {
	width: 17px;
	height: 43%;
	margin: 5px 0 auto;
	background-color: #cdcdcd;
}
.cursor {
	position: absolute;
	right: 16px;
	bottom: 0;
	width: 14px;
	height: 17px;
}
```
